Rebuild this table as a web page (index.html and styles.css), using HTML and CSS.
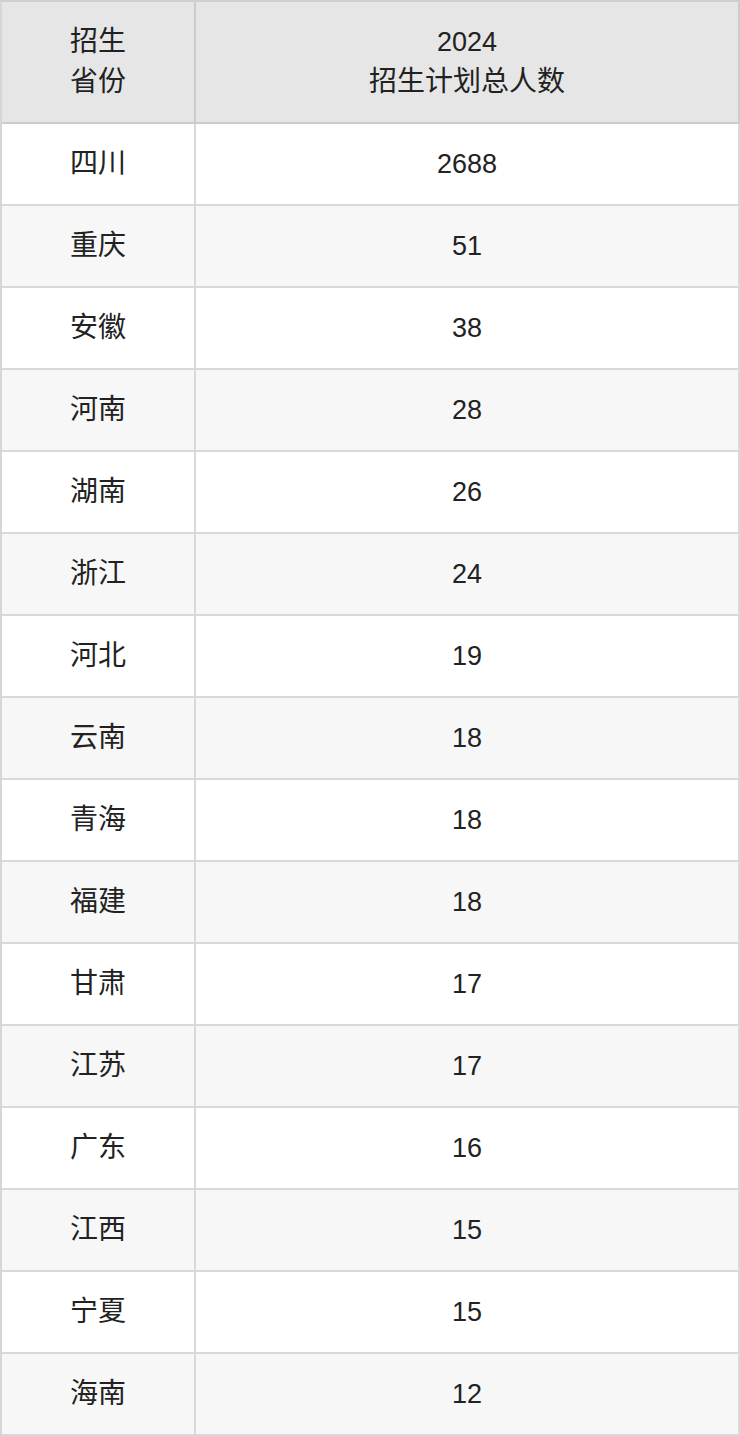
FILE: index.html
```html
<!DOCTYPE html>
<html lang="zh">
<head>
<meta charset="utf-8">
<link rel="stylesheet" href="styles.css">
</head>
<body>
<div class="table">
  <div class="cell head">招生<br>省份</div>
  <div class="cell head"><span class="num">2024</span><span>招生计划总人数</span></div>
  <div class="cell">四川</div><div class="cell num">2688</div>
  <div class="cell alt">重庆</div><div class="cell alt num">51</div>
  <div class="cell">安徽</div><div class="cell num">38</div>
  <div class="cell alt">河南</div><div class="cell alt num">28</div>
  <div class="cell">湖南</div><div class="cell num">26</div>
  <div class="cell alt">浙江</div><div class="cell alt num">24</div>
  <div class="cell">河北</div><div class="cell num">19</div>
  <div class="cell alt">云南</div><div class="cell alt num">18</div>
  <div class="cell">青海</div><div class="cell num">18</div>
  <div class="cell alt">福建</div><div class="cell alt num">18</div>
  <div class="cell">甘肃</div><div class="cell num">17</div>
  <div class="cell alt">江苏</div><div class="cell alt num">17</div>
  <div class="cell">广东</div><div class="cell num">16</div>
  <div class="cell alt">江西</div><div class="cell alt num">15</div>
  <div class="cell">宁夏</div><div class="cell num">15</div>
  <div class="cell alt">海南</div><div class="cell alt num">12</div>
</div>
</body>
</html>
```
FILE: styles.css
```css
html, body {
  margin: 0;
  padding: 0;
  background: #ffffff;
}
.table {
  display: grid;
  grid-template-columns: 194px 544px;
  grid-template-rows: 122px;
  grid-auto-rows: 82px;
  border-top: 2px solid #cfcfcf;
  border-left: 2px solid #d6d6d6;
  width: 738px;
  font-family: "Liberation Sans", "Noto Sans CJK SC", sans-serif;
  font-size: 28px;
  color: #222222;
}
.cell {
  display: flex;
  align-items: center;
  justify-content: center;
  text-align: center;
  border-right: 2px solid #d9d9d9;
  border-bottom: 2px solid #d9d9d9;
  background: #ffffff;
  line-height: 40px;
}
.cell.alt {
  background: #f7f7f7;
}
.cell.head {
  flex-direction: column;
  background: #e6e6e6;
  border-color: #cccccc;
}
.num {
  font-size: 27px;
}
```
